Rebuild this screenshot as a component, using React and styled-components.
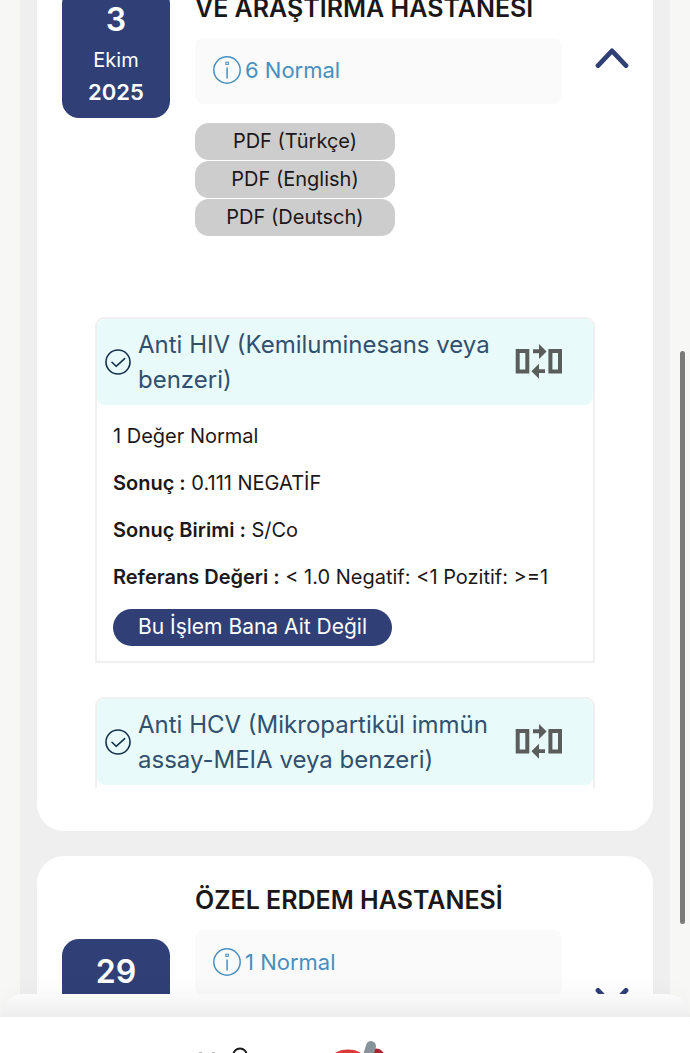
import React from "react";
import styled, { createGlobalStyle } from "styled-components";

const GlobalStyle = createGlobalStyle`
  * {
    box-sizing: border-box;
  }
  body {
    margin: 0;
    background: #f7f7f5;
    color: #1c1718;
    font-family: Inter, "Noto Sans", sans-serif;
    font-size: 20px;
    overflow: hidden;
  }
  button {
    font: inherit;
    color: inherit;
    border: none;
    cursor: pointer;
  }
`;

const Page = styled.div`
  height: 100vh;
  padding: 0 20px;
  overflow: hidden;
`;

const Panel = styled.main`
  background: #efefef;
  padding: 0 17px;
`;

// the list is scrolled down a little
const CardList = styled.div`
  display: flex;
  flex-direction: column;
  gap: 25px;
  margin-top: -156px;
`;

const Card = styled.section`
  background: #fff;
  border-radius: 27px;
  padding: 24px 24px 43px 25px;
`;

const CardHeader = styled.header`
  display: grid;
  grid-template-columns: 108px 1fr 42px;
  column-gap: 25px;
  align-items: center;
`;

const DateBox = styled.div`
  display: flex;
  flex-direction: column;
  align-items: center;
  height: 131px;
  padding-top: 9px;
  border-radius: 17px;
  background: #304077;
  color: #fff;
  line-height: 32px;
`;

const Day = styled.strong`
  font-size: 32px;
  font-weight: 600;
  line-height: 48px;
`;

const Year = styled.strong`
  font-size: 22px;
  font-weight: 600;
`;

const Title = styled.h2`
  display: flex;
  align-items: flex-end;
  min-height: ${(props) => props.$lines * 40}px;
  margin: 0 0 10px;
  font-size: 25px;
  font-weight: 600;
  line-height: 40px;
  white-space: nowrap;
`;

const Status = styled.div`
  display: flex;
  align-items: center;
  gap: 4px;
  height: 66px;
  padding: 0 18px 2px;
  margin-bottom: 19px;
  border-radius: 9px;
  background: #fafafa;
  color: #488fc0;
  font-size: 22px;
`;

const PdfList = styled.div`
  display: flex;
  flex-direction: column;
  align-items: flex-start;
  gap: 1px;
  min-height: 113px;
`;

const PdfButton = styled.button`
  width: 200px;
  height: 37px;
  padding: 0 0 2px;
  border-radius: 14px;
  background: #cdcdcd;
`;

const ToggleButton = styled.button`
  display: flex;
  justify-self: end;
  padding: 0;
  background: none;
`;

const Results = styled.div`
  display: flex;
  flex-direction: column;
  gap: 34px;
  max-height: 471px;
  margin: 81px 34px 0 33px;
  overflow: hidden;
`;

const Result = styled.article`
  flex: none;
  border: 2px solid #f0f0f0;
  border-radius: 9px 9px 0 0;
`;

const ResultHeader = styled.div`
  display: flex;
  align-items: center;
  padding: 8px 30px 8px 8px;
  border-radius: 8px;
  background: #e8fbfa;
`;

const ResultName = styled.h3`
  flex: 1;
  margin: 0 8px 0 7px;
  color: #31506f;
  font-size: 24px;
  font-weight: 400;
  line-height: 35px;
`;

const ResultBody = styled.div`
  display: flex;
  flex-direction: column;
  align-items: flex-start;
  gap: 16px;
  padding: 16px 16px 15px;
`;

const Line = styled.p`
  margin: 0;
  line-height: 31px;

  b {
    font-weight: 600;
  }
`;

const RejectButton = styled.button`
  height: 37px;
  padding: 0 25px 2px;
  border-radius: 19px;
  background: #304077;
  color: #fff;
  font-size: 21px;
`;

const CompareButton = styled.button`
  display: flex;
  padding: 0;
  background: none;
`;

const ScrollThumb = styled.div`
  position: fixed;
  top: 351px;
  right: 5px;
  width: 5px;
  height: 573px;
  border-radius: 3px;
  background: #7b7b7a;
`;

const BottomBar = styled.nav`
  position: fixed;
  left: 0;
  right: 0;
  bottom: 0;
  box-shadow: 0 -2px 24px rgba(0, 0, 0, 0.04);
  border-radius: 32px 32px 0 0;
`;

const BarEdge = styled.div`
  height: 23px;
  border-radius: 32px 32px 0 0;
  background: linear-gradient(#fbfbfb, #ededed);
`;

const BarBody = styled.div`
  display: flex;
  align-items: flex-end;
  height: 36px;
  padding-left: 190px;
  background: #fff;
`;

const InfoIcon = () => (
  <svg width="28" height="28" viewBox="0 0 28 28" fill="none" stroke="currentColor">
    <circle cx="14" cy="14" r="13.2" strokeWidth="1.5" />
    <rect x="12.8" y="6.2" width="2.6" height="2.2" strokeWidth="1" />
    <path d="M14.1 11.6v11" strokeWidth="1.5" />
  </svg>
);

const CheckIcon = () => (
  <svg width="26" height="26" viewBox="0 0 26 26" fill="none" stroke="#14304d" strokeWidth="1.6">
    <circle cx="13" cy="13" r="12" />
    <path d="M7 13.3l4.1 4 8.6-7.6" strokeLinecap="round" strokeLinejoin="round" />
  </svg>
);

const CompareIcon = () => (
  <svg width="48" height="36" viewBox="0 0 48 36" fill="#5b5d5c">
    <path
      fillRule="evenodd"
      d="M.7 5h13.6v24.4H.7zM4.7 9v16.4h5.6V9zM33.4 5H47v24.4H33.4zM37.4 9v16.4H43V9z"
    />
    <path d="M18 5.3h6V0l7.6 7.4L24 15v-5.8h-6z" />
    <path d="M30 25.2h-6v-5.5l-7.6 7.5 7.6 7.6V29h6z" />
  </svg>
);

const Chevron = ({ open }) => (
  <svg
    width="34"
    height="32"
    viewBox="0 0 34 32"
    fill="none"
    stroke="#304077"
    strokeWidth="4.8"
    strokeLinecap="round"
    strokeLinejoin="round"
  >
    <path d={open ? "M3 29.6L17 14.9L31 29.6" : "M3 2.4L17 17.1L31 2.4"} />
  </svg>
);

const BarIcons = () => (
  <svg width="200" height="14" viewBox="0 0 200 14" fill="none">
    <path d="M9 13.5h3M22 13.5h3" stroke="#bbb" />
    <circle cx="50" cy="16" r="6.6" stroke="#1b1b1b" strokeWidth="2" />
    <circle cx="186" cy="18" r="8.5" fill="#a8242e" />
    <ellipse cx="158" cy="19" rx="16" ry="8.4" fill="#d93a3a" />
    <path d="M181 7L177 20" stroke="#87949a" strokeWidth="10" strokeLinecap="round" />
  </svg>
);

const HospitalHeader = ({ day, month, year, name, lines, status, pdfs = [], open }) => {
  return (
    <CardHeader>
      <DateBox>
        <Day>{day}</Day>
        {month && <span>{month}</span>}
        {year && <Year>{year}</Year>}
      </DateBox>
      <div>
        <Title $lines={lines}>{name}</Title>
        <Status>
          <InfoIcon />
          <span>{status}</span>
        </Status>
        <PdfList>
          {pdfs.map((lang) => (
            <PdfButton key={lang}>PDF ({lang})</PdfButton>
          ))}
        </PdfList>
      </div>
      <ToggleButton aria-expanded={open}>
        <Chevron open={open} />
      </ToggleButton>
    </CardHeader>
  );
};

const ResultCard = ({ name, children }) => {
  return (
    <Result>
      <ResultHeader>
        <CheckIcon />
        <ResultName>{name}</ResultName>
        <CompareButton>
          <CompareIcon />
        </CompareButton>
      </ResultHeader>
      <ResultBody>{children}</ResultBody>
    </Result>
  );
};

const App = () => {
  return (
    <>
      <GlobalStyle />
      <Page>
        <Panel>
          <CardList>
            <Card>
              <HospitalHeader
                day="3"
                month="Ekim"
                year="2025"
                name="VE ARAŞTIRMA HASTANESİ"
                lines={4}
                status="6 Normal"
                pdfs={["Türkçe", "English", "Deutsch"]}
                open={true}
              />
              <Results>
                <ResultCard name="Anti HIV (Kemiluminesans veya benzeri)">
                  <Line>1 Değer Normal</Line>
                  <Line><b>Sonuç :</b> 0.111 NEGATİF</Line>
                  <Line><b>Sonuç Birimi :</b> S/Co</Line>
                  <Line><b>Referans Değeri :</b> &lt; 1.0 Negatif: &lt;1 Pozitif: &gt;=1</Line>
                  <RejectButton>Bu İşlem Bana Ait Değil</RejectButton>
                </ResultCard>
                <ResultCard name="Anti HCV (Mikropartikül immün assay-MEIA veya benzeri)" />
              </Results>
            </Card>
            <Card>
              <HospitalHeader
                day="29"
                name="ÖZEL ERDEM HASTANESİ"
                lines={1}
                status="1 Normal"
                open={false}
              />
            </Card>
          </CardList>
        </Panel>
      </Page>
      <ScrollThumb />
      <BottomBar>
        <BarEdge />
        <BarBody>
          <BarIcons />
        </BarBody>
      </BottomBar>
    </>
  );
};

export default App;
